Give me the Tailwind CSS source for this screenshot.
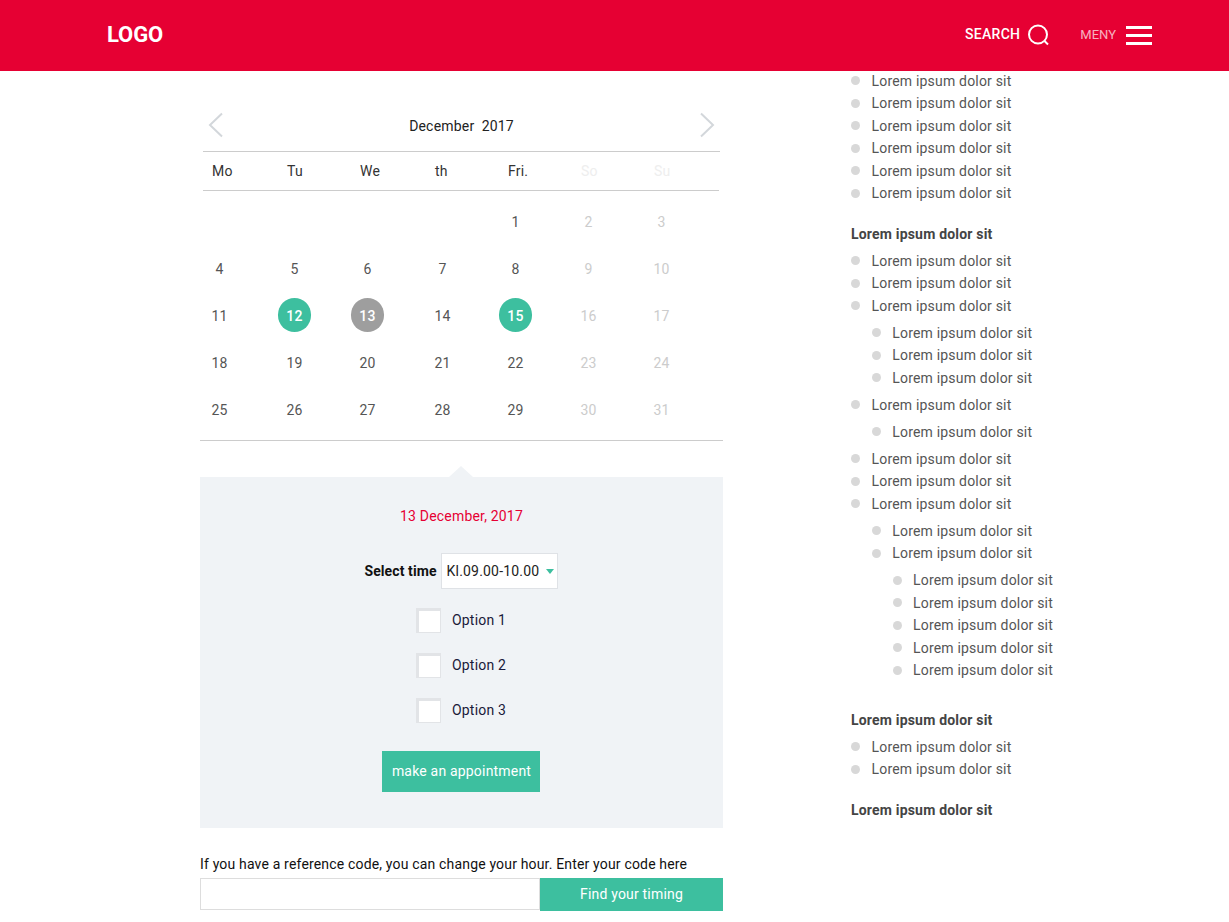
<!DOCTYPE html>
<html lang="en">
<head>
  <meta charset="UTF-8" />
  <meta name="viewport" content="width=device-width, initial-scale=1.0"/>
  <title>Appointment</title>
  <script src="https://cdn.jsdelivr.net/npm/@tailwindcss/browser@4"></script>
</head>
<body class="bg-white font-['Roboto',sans-serif] text-[14px] tracking-[0.19px] text-[#555]">
  <header class="h-[71px] bg-[#e60033] flex items-center justify-between pl-[107px] pr-[77px] text-white">
    <div class="text-[22px] font-bold tracking-[-0.1px] -translate-y-px">LOGO</div>
    <div class="flex items-center">
      <span class="text-[14px] font-medium tracking-[0.3px] -translate-y-px">SEARCH</span>
      <svg class="ml-[8px] w-[22px] h-[22px] -translate-y-px" viewBox="0 0 22 22" fill="none" stroke="white" stroke-width="2"><circle cx="10" cy="10.500" r="9"/><path d="M16.500 17l3.500 3.500"/></svg>
      <span class="ml-[30px] text-[13px] tracking-normal text-white/70 -translate-y-px">MENY</span>
      <div class="ml-[10px] w-[26px] flex flex-col gap-[5px]">
        <div class="h-[3px] bg-white"></div>
        <div class="h-[3px] bg-white"></div>
        <div class="h-[3px] bg-white"></div>
      </div>
    </div>
  </header>

  <main class="flex pl-[200px]">
    <section class="w-[523px]">
      <!-- calendar -->
      <div class="h-[81px] relative flex items-center justify-center text-[#222] pt-[30px] mx-[3px] border-b border-[#ccc]">
        <svg class="absolute left-[5px] top-[41px] w-[16px] h-[26px]" viewBox="0 0 16 26" fill="none" stroke="#d3d7db" stroke-width="2"><path d="M14 1.500L2 13l12 11.500"/></svg>
        <span>December &nbsp;2017</span>
        <svg class="absolute right-[5px] top-[41px] w-[16px] h-[26px]" viewBox="0 0 16 26" fill="none" stroke="#d3d7db" stroke-width="2"><path d="M2 1.500L14 13 2 24.500"/></svg>
      </div>
      <div class="mx-[3px] w-[516px] h-[39px] grid grid-cols-[75px_73px_75px_73px_73px_73px_74px] items-center border-b border-[#ccc] text-[#333] pt-[1px]">
        <span class="pl-[9px]">Mo</span><span class="pl-[9px]">Tu</span><span class="pl-[9px]">We</span><span class="pl-[9px]">th</span><span class="pl-[9px]">Fri.</span><span class="pl-[9px] text-[#eee]">So</span><span class="pl-[9px] text-[#eee]">Su</span>
      </div>
      <div class="ml-[3px] w-[516px] grid grid-cols-[75px_73px_75px_73px_73px_73px_74px] auto-rows-[47px] pt-[8px] items-center">
        <span></span><span></span><span></span><span></span>
        <span class="w-[33px] text-center">1</span><span class="w-[33px] text-center text-[#ccc]">2</span><span class="w-[33px] text-center text-[#ccc]">3</span>
        <span class="w-[33px] text-center">4</span><span class="w-[33px] text-center">5</span><span class="w-[33px] text-center">6</span><span class="w-[33px] text-center">7</span><span class="w-[33px] text-center">8</span><span class="w-[33px] text-center text-[#ccc]">9</span><span class="w-[33px] text-center text-[#ccc]">10</span>
        <span class="w-[33px] text-center">11</span>
        <span class="w-[33px] h-[34px] -mt-[3px] pt-[3px] rounded-full bg-[#3dbf9f] text-white font-medium flex items-center justify-center">12</span>
        <span class="w-[33px] h-[34px] -mt-[3px] pt-[3px] rounded-full bg-[#9e9e9e] text-white font-medium flex items-center justify-center">13</span>
        <span class="w-[33px] text-center">14</span>
        <span class="w-[33px] h-[34px] -mt-[3px] pt-[3px] rounded-full bg-[#3dbf9f] text-white font-medium flex items-center justify-center">15</span>
        <span class="w-[33px] text-center text-[#ccc]">16</span><span class="w-[33px] text-center text-[#ccc]">17</span>
        <span class="w-[33px] text-center">18</span><span class="w-[33px] text-center">19</span><span class="w-[33px] text-center">20</span><span class="w-[33px] text-center">21</span><span class="w-[33px] text-center">22</span><span class="w-[33px] text-center text-[#ccc]">23</span><span class="w-[33px] text-center text-[#ccc]">24</span>
        <span class="w-[33px] text-center">25</span><span class="w-[33px] text-center">26</span><span class="w-[33px] text-center">27</span><span class="w-[33px] text-center">28</span><span class="w-[33px] text-center">29</span><span class="w-[33px] text-center text-[#ccc]">30</span><span class="w-[33px] text-center text-[#ccc]">31</span>
      </div>
      <div class="border-b border-[#ccc] mt-[6px]"></div>

      <!-- booking panel -->
      <div class="relative mt-[36px] h-[351px] bg-[#f0f3f6] flex flex-col items-center">
        <div class="absolute left-[249px] -top-[11px] w-0 h-0 border-x-[12px] border-x-transparent border-b-[11px] border-b-[#f0f3f6]"></div>
        <div class="mt-[28px] leading-[22px] text-[#e60033]">13 December, 2017</div>
        <div class="mt-[26px] -ml-[1px] flex items-center text-[#111]">
          <span class="font-bold tracking-[0.1px] mr-[4px]">Select time</span>
          <div class="relative">
            <select class="appearance-none w-[117px] h-[36px] bg-white border border-[#dfe2e6] pl-[5px] rounded-none text-[#222]">
              <option>Kl.09.00-10.00</option>
            </select>
            <div class="absolute right-[4px] top-[16px] w-0 h-0 border-x-[4px] border-x-transparent border-t-[5px] border-t-[#3dbf9f]"></div>
          </div>
        </div>
        <div class="mt-[19px] w-[100px] ml-[9px] flex flex-col gap-[20px] text-[#1a1a3a]">
          <label class="flex items-center h-[25px]"><input type="checkbox" class="appearance-none w-[25px] h-[25px] bg-white border-t-[3px] border-l-[3px] border-r border-b border-[#e2e4e7]" /><span class="ml-[11px]">Option 1</span></label>
          <label class="flex items-center h-[25px]"><input type="checkbox" class="appearance-none w-[25px] h-[25px] bg-white border-t-[3px] border-l-[3px] border-r border-b border-[#e2e4e7]" /><span class="ml-[11px]">Option 2</span></label>
          <label class="flex items-center h-[25px]"><input type="checkbox" class="appearance-none w-[25px] h-[25px] bg-white border-t-[3px] border-l-[3px] border-r border-b border-[#e2e4e7]" /><span class="ml-[11px]">Option 3</span></label>
        </div>
        <button class="mt-[28px] ml-[-2px] pl-[2px] w-[158px] h-[41px] bg-[#3dbf9f] text-white">make an appointment</button>
      </div>

      <p class="mt-[25px] leading-[22px] tracking-[0.17px] text-[#111]">If you have a reference code, you can change your hour. Enter your code here</p>
      <div class="flex mt-[3px]">
        <input type="text" class="w-[340px] h-[32px] bg-white border border-[#ddd]" />
        <button class="w-[183px] h-[33px] bg-[#3dbf9f] text-white">Find your timing</button>
      </div>
    </section>

    <!-- side list -->
    <aside class="ml-[128px] -mt-[1.500px] leading-[22.500px] text-[#555]">
      <ul>
        <li class="flex items-center"><i class="w-[9px] h-[9px] rounded-full bg-[#d8d8d8] mr-[11.500px]"></i>Lorem ipsum dolor sit</li>
        <li class="flex items-center"><i class="w-[9px] h-[9px] rounded-full bg-[#d8d8d8] mr-[11.500px]"></i>Lorem ipsum dolor sit</li>
        <li class="flex items-center"><i class="w-[9px] h-[9px] rounded-full bg-[#d8d8d8] mr-[11.500px]"></i>Lorem ipsum dolor sit</li>
        <li class="flex items-center"><i class="w-[9px] h-[9px] rounded-full bg-[#d8d8d8] mr-[11.500px]"></i>Lorem ipsum dolor sit</li>
        <li class="flex items-center"><i class="w-[9px] h-[9px] rounded-full bg-[#d8d8d8] mr-[11.500px]"></i>Lorem ipsum dolor sit</li>
        <li class="flex items-center"><i class="w-[9px] h-[9px] rounded-full bg-[#d8d8d8] mr-[11.500px]"></i>Lorem ipsum dolor sit</li>
      </ul>
      <h4 class="mt-[18.500px] mb-[4px] font-bold text-[#444]">Lorem ipsum dolor sit</h4>
      <ul>
        <li class="flex items-center"><i class="w-[9px] h-[9px] rounded-full bg-[#d8d8d8] mr-[11.500px]"></i>Lorem ipsum dolor sit</li>
        <li class="flex items-center"><i class="w-[9px] h-[9px] rounded-full bg-[#d8d8d8] mr-[11.500px]"></i>Lorem ipsum dolor sit</li>
        <li class="flex items-center"><i class="w-[9px] h-[9px] rounded-full bg-[#d8d8d8] mr-[11.500px]"></i>Lorem ipsum dolor sit</li>
        <li>
          <ul class="pl-[20.750px] py-[4.500px]">
            <li class="flex items-center"><i class="w-[9px] h-[9px] rounded-full bg-[#d8d8d8] mr-[11.500px]"></i>Lorem ipsum dolor sit</li>
            <li class="flex items-center"><i class="w-[9px] h-[9px] rounded-full bg-[#d8d8d8] mr-[11.500px]"></i>Lorem ipsum dolor sit</li>
            <li class="flex items-center"><i class="w-[9px] h-[9px] rounded-full bg-[#d8d8d8] mr-[11.500px]"></i>Lorem ipsum dolor sit</li>
          </ul>
        </li>
        <li class="flex items-center"><i class="w-[9px] h-[9px] rounded-full bg-[#d8d8d8] mr-[11.500px]"></i>Lorem ipsum dolor sit</li>
        <li>
          <ul class="pl-[20.750px] py-[4.500px]">
            <li class="flex items-center"><i class="w-[9px] h-[9px] rounded-full bg-[#d8d8d8] mr-[11.500px]"></i>Lorem ipsum dolor sit</li>
          </ul>
        </li>
        <li class="flex items-center"><i class="w-[9px] h-[9px] rounded-full bg-[#d8d8d8] mr-[11.500px]"></i>Lorem ipsum dolor sit</li>
        <li class="flex items-center"><i class="w-[9px] h-[9px] rounded-full bg-[#d8d8d8] mr-[11.500px]"></i>Lorem ipsum dolor sit</li>
        <li class="flex items-center"><i class="w-[9px] h-[9px] rounded-full bg-[#d8d8d8] mr-[11.500px]"></i>Lorem ipsum dolor sit</li>
        <li>
          <ul class="pl-[20.750px] py-[4.500px]">
            <li class="flex items-center"><i class="w-[9px] h-[9px] rounded-full bg-[#d8d8d8] mr-[11.500px]"></i>Lorem ipsum dolor sit</li>
            <li class="flex items-center"><i class="w-[9px] h-[9px] rounded-full bg-[#d8d8d8] mr-[11.500px]"></i>Lorem ipsum dolor sit</li>
            <li>
              <ul class="pl-[20.750px] py-[4.500px]">
                <li class="flex items-center"><i class="w-[9px] h-[9px] rounded-full bg-[#d8d8d8] mr-[11.500px]"></i>Lorem ipsum dolor sit</li>
                <li class="flex items-center"><i class="w-[9px] h-[9px] rounded-full bg-[#d8d8d8] mr-[11.500px]"></i>Lorem ipsum dolor sit</li>
                <li class="flex items-center"><i class="w-[9px] h-[9px] rounded-full bg-[#d8d8d8] mr-[11.500px]"></i>Lorem ipsum dolor sit</li>
                <li class="flex items-center"><i class="w-[9px] h-[9px] rounded-full bg-[#d8d8d8] mr-[11.500px]"></i>Lorem ipsum dolor sit</li>
                <li class="flex items-center"><i class="w-[9px] h-[9px] rounded-full bg-[#d8d8d8] mr-[11.500px]"></i>Lorem ipsum dolor sit</li>
              </ul>
            </li>
          </ul>
        </li>
      </ul>
      <h4 class="mt-[18.500px] mb-[4px] font-bold text-[#444]">Lorem ipsum dolor sit</h4>
      <ul>
        <li class="flex items-center"><i class="w-[9px] h-[9px] rounded-full bg-[#d8d8d8] mr-[11.500px]"></i>Lorem ipsum dolor sit</li>
        <li class="flex items-center"><i class="w-[9px] h-[9px] rounded-full bg-[#d8d8d8] mr-[11.500px]"></i>Lorem ipsum dolor sit</li>
      </ul>
      <h4 class="mt-[18.500px] font-bold text-[#444]">Lorem ipsum dolor sit</h4>
    </aside>
  </main>
</body>
</html>
